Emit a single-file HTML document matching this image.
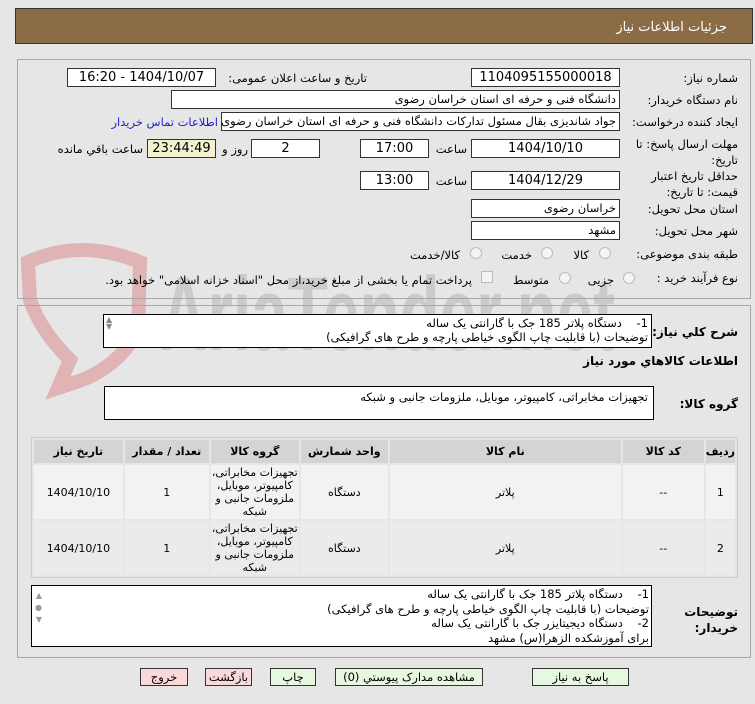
<!DOCTYPE html>
<html><head><meta charset="utf-8">
<style>
*{box-sizing:border-box;margin:0;padding:0}
body{width:755px;height:704px;background:#e6e6e6;font-family:"DejaVu Sans","Liberation Sans",sans-serif;font-size:11.5px;color:#000;position:relative;overflow:hidden}
.a{position:absolute}
.hdr{left:15px;top:8px;width:738px;height:36px;background:#8c6c45;border:1px solid #333}
.panel{border:1px solid #a8a8a8;background:#e8e8e8}
.in{position:absolute;background:#fff;border:1px solid #333;height:19px;line-height:17px;padding:0 3px;direction:rtl;white-space:nowrap;overflow:hidden}
.c{text-align:center;font-size:13px}
.l{position:absolute;direction:rtl;white-space:nowrap}
.b{font-weight:bold}
.radio{position:absolute;width:12px;height:12px;border-radius:50%;border:1px solid #bbb;background:#f4f4f4}
table{border-collapse:separate;border-spacing:2px}
td,th{text-align:center;font-size:11px}
th{background:#d4d4d4;height:23px;font-weight:bold}
.btn{position:absolute;height:18px;border:1px solid #333;text-align:center;line-height:16px;font-size:11.5px}
</style></head><body>
<svg class="a" style="left:0;top:0" width="755" height="704">
<path d="M28 262 Q80 238 140 262 L138 330 Q120 365 82 380 L58 388 L70 360 Q40 330 30 300 Z" fill="none" stroke="#e0b4b4" stroke-width="14"/>
<text x="160" y="350" font-family="Liberation Sans" font-weight="bold" font-size="105" fill="#cbcbcb" textLength="455" lengthAdjust="spacingAndGlyphs">AriaTender.net</text>
</svg>
<div class="a hdr"></div>
<div class="l" style="right:28px;top:20px;color:#fff;font-size:13px">جزئیات اطلاعات نیاز</div>

<div class="a panel" style="left:17px;top:59px;width:734px;height:240px;background:transparent"></div>
<div class="l" style="right:17px;top:71px">شماره نیاز:</div>
<div class="in c" style="left:471px;top:68px;width:149px">1104095155000018</div>
<div class="l" style="right:388px;top:71px">تاریخ و ساعت اعلان عمومی:</div>
<div class="in c" style="left:67px;top:68px;width:149px">1404/10/07 - 16:20</div>

<div class="l" style="right:17px;top:93px">نام دستگاه خریدار:</div>
<div class="in" style="left:171px;top:90px;width:449px">دانشگاه فنی و حرفه ای استان خراسان رضوی</div>

<div class="l" style="right:17px;top:115px">ایجاد کننده درخواست:</div>
<div class="in" style="left:221px;top:112px;width:399px">جواد شاندیزی بقال مسئول تدارکات دانشگاه فنی و حرفه ای استان خراسان رضوی</div>
<div class="l" style="right:537px;top:115px;color:#2020d0">اطلاعات تماس خریدار</div>

<div class="l" style="right:17px;top:136px;line-height:16px;text-align:right">مهلت ارسال پاسخ: تا<br>تاریخ:</div>
<div class="in c" style="left:471px;top:139px;width:149px">1404/10/10</div>
<div class="l" style="right:288px;top:142px">ساعت</div>
<div class="in c" style="left:360px;top:139px;width:69px">17:00</div>
<div class="in c" style="left:251px;top:139px;width:69px">2</div>
<div class="l" style="right:507px;top:142px">روز و</div>
<div class="in c" style="left:147px;top:139px;width:69px;background:#f3f1cf">23:44:49</div>
<div class="l" style="right:612px;top:142px">ساعت باقي مانده</div>

<div class="l" style="right:17px;top:168px;line-height:16px">حداقل تاریخ اعتبار<br>قیمت: تا تاریخ:</div>
<div class="in c" style="left:471px;top:171px;width:149px">1404/12/29</div>
<div class="l" style="right:288px;top:174px">ساعت</div>
<div class="in c" style="left:360px;top:171px;width:69px">13:00</div>

<div class="l" style="right:17px;top:202px">استان محل تحویل:</div>
<div class="in" style="left:471px;top:199px;width:149px">خراسان رضوی</div>
<div class="l" style="right:17px;top:224px">شهر محل تحویل:</div>
<div class="in" style="left:471px;top:221px;width:149px">مشهد</div>

<div class="l" style="right:17px;top:247px">طبقه بندی موضوعی:</div>
<div class="radio" style="left:599px;top:247px"></div><div class="l" style="right:166px;top:248px">كالا</div>
<div class="radio" style="left:541px;top:247px"></div><div class="l" style="right:223px;top:248px">خدمت</div>
<div class="radio" style="left:470px;top:247px"></div><div class="l" style="right:295px;top:248px">كالا/خدمت</div>

<div class="l" style="right:17px;top:271px">نوع فرآیند خرید :</div>
<div class="radio" style="left:623px;top:272px"></div><div class="l" style="right:141px;top:273px">جزیی</div>
<div class="radio" style="left:559px;top:272px"></div><div class="l" style="right:206px;top:273px">متوسط</div>
<div class="a" style="left:481px;top:271px;width:12px;height:12px;border:1px solid #bbb;background:#f4f4f4"></div>
<div class="l" style="right:283px;top:273px">پرداخت تمام یا بخشی از مبلغ خرید،از محل "اسناد خزانه اسلامی" خواهد بود.</div>

<div class="a panel" style="left:17px;top:305px;width:734px;height:353px;background:transparent"></div>
<div class="l b" style="right:17px;top:325px;font-size:12px">شرح کلي نیاز:</div>
<div class="a" style="left:103px;top:314px;width:549px;height:34px;background:#fff;border:1px solid #000"></div>
<div class="l" style="right:107px;top:316px;line-height:14px;text-align:right">1-&nbsp;&nbsp;&nbsp; دستگاه پلاتر 185 جک با گارانتی یک ساله<br>توضیحات (با قابلیت چاپ الگوی خیاطی پارچه و طرح های گرافیکی)</div>
<div class="l" style="left:106px;top:316px;color:#888;font-size:8px;line-height:7px">▲<br>▼</div>
<div class="l b" style="right:17px;top:354px;font-size:12px">اطلاعات كالاهاي مورد نیاز</div>
<div class="l b" style="right:17px;top:397px;font-size:12px">گروه کالا:</div>
<div class="a" style="left:104px;top:386px;width:550px;height:34px;background:#fff;border:1px solid #000"></div>
<div class="l" style="right:107px;top:390px">تجهیزات مخابراتی، کامپیوتر، موبایل، ملزومات جانبی و شبکه</div>

<div class="a" style="left:31px;top:437px;width:707px;height:141px;border:1px solid #ccc">
<table dir="rtl" style="width:705px">
<tr><th style="width:27px">ردیف</th><th style="width:81px">کد کالا</th><th style="width:231px">نام کالا</th><th style="width:87px">واحد شمارش</th><th style="width:88px">گروه کالا</th><th style="width:84px">تعداد / مقدار</th><th>تاریخ نیاز</th></tr>
<tr style="background:#f2f2f2;height:54px"><td>1</td><td>--</td><td>پلاتر</td><td>دستگاه</td><td style="line-height:13px">تجهیزات مخابراتی، کامپیوتر، موبایل، ملزومات جانبی و شبکه</td><td>1</td><td>1404/10/10</td></tr>
<tr style="background:#ebebeb;height:54px"><td>2</td><td>--</td><td>پلاتر</td><td>دستگاه</td><td style="line-height:13px">تجهیزات مخابراتی، کامپیوتر، موبایل، ملزومات جانبی و شبکه</td><td>1</td><td>1404/10/10</td></tr>
</table></div>

<div class="l b" style="right:17px;top:604px;line-height:16px;font-size:12px">توضیحات<br>خریدار:</div>
<div class="a" style="left:31px;top:585px;width:621px;height:62px;background:#fff;border:1px solid #000"></div>
<div class="l" style="right:106px;top:587px;line-height:14.5px;text-align:right">1-&nbsp;&nbsp;&nbsp; دستگاه پلاتر 185 جک با گارانتی یک ساله<br>توضیحات (با قابلیت چاپ الگوی خیاطی پارچه و طرح های گرافیکی)<br>2-&nbsp;&nbsp;&nbsp; دستگاه دیجیتایزر جک با گارانتی یک ساله<br>برای آموزشکده الزهرا(س) مشهد</div>
<div class="l" style="left:35px;top:590px;color:#999;font-size:8px;line-height:12px">▲<br>●<br>▼</div>

<div class="btn" style="left:532px;top:668px;width:97px;background:#e6f8e0">پاسخ به نیاز</div>
<div class="btn" style="left:335px;top:668px;width:148px;background:#e6f8e0">مشاهده مدارک پیوستي (0)</div>
<div class="btn" style="left:270px;top:668px;width:46px;background:#e6f8e0">چاپ</div>
<div class="btn" style="left:205px;top:668px;width:47px;background:#fbd9d9">بازگشت</div>
<div class="btn" style="left:140px;top:668px;width:48px;background:#fbd9d9">خروج</div>
</body></html>
